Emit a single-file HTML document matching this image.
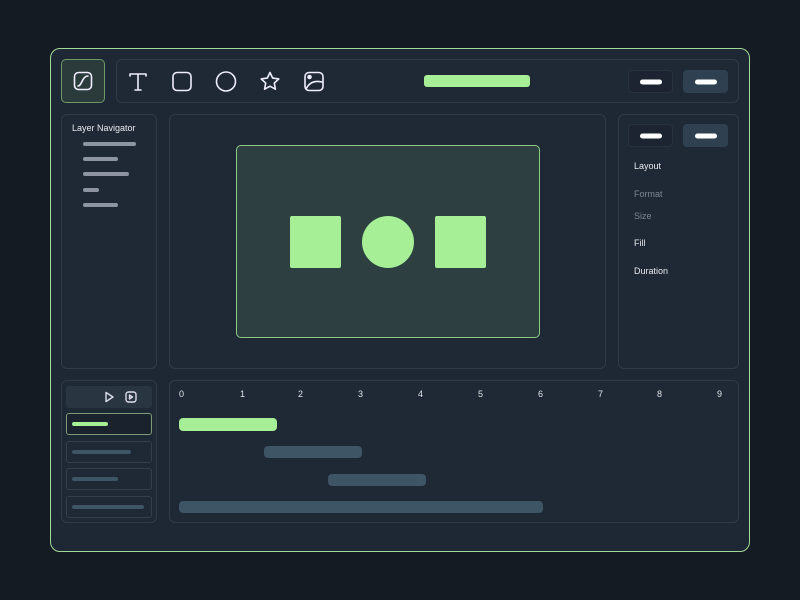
<!DOCTYPE html>
<html><head><style>
*{margin:0;padding:0;box-sizing:border-box}
body{width:800px;height:600px;background:#151b23;position:relative;overflow:hidden;font-family:"Liberation Sans",sans-serif}
.a{position:absolute}
.frame{left:50px;top:48px;width:700px;height:504px;border:1.5px solid #9fdc92;border-radius:10px;background:#1e2834}
.p{border:1px solid #2f3b48;border-radius:6px;background:#1f2935}
.g{background:#a6ef97;border-radius:3px}
.pill{width:22px;height:5px;background:#fff;border-radius:3px;position:absolute;left:50%;top:50%;transform:translate(-50%,-50%)}
.btn{border-radius:4px}
.ln{height:4px;background:#8d95a2;border-radius:2px}
.t{color:#e8ebef;font-size:9px}
.num{color:#dfe3e8;font-size:9px;top:389px}
.bar{background:#3e5566;border-radius:4px;height:12px}
.it{border:1px solid #33404c;border-radius:3px;left:66px;width:86px;height:22px}
.it div{position:absolute;left:5px;top:8px;height:4px;border-radius:2px;background:#3e5566}
</style></head><body>
<div class="a frame"></div>
<div class="a" style="left:61px;top:59px;width:44px;height:44px;border:1px solid #6e9a68;border-radius:5px;background:#2b3a3a"></div>
<svg class="a" style="left:73px;top:71px" width="20" height="20" viewBox="0 0 20 20" fill="none" stroke="#eef" stroke-width="1.6"><rect x="1.5" y="1.5" width="17" height="17" rx="4"/><path d="M5 15c4 0 4-10 10-10" stroke-linecap="round"/></svg>
<div class="a p" style="left:116px;top:59px;width:623px;height:44px"></div>
<svg class="a" style="left:128px;top:71px" width="200" height="22" viewBox="0 0 200 22" fill="none" stroke="#eef" stroke-width="1.6" stroke-linecap="round" stroke-linejoin="round">
<path d="M2 3h16M2 3v2M18 3v2M10 3v16M7 19h6"/>
<rect x="45" y="1.5" width="18" height="18" rx="4"/>
<circle cx="98" cy="10.5" r="9.5"/>
<path d="M142 1.5l2.7 5.6 6.1.8-4.5 4.2 1.1 6.1-5.4-3-5.4 3 1.1-6.1-4.5-4.2 6.1-.8z"/>
<rect x="177" y="1.5" width="18" height="18" rx="4"/><circle cx="181.5" cy="6" r="1.5" fill="#eef"/><path d="M178 18c3-6 8-9 16-7"/>
</svg>
<div class="a g" style="left:424px;top:75px;width:106px;height:12px"></div>
<div class="a btn" style="left:628px;top:70px;width:45px;height:23px;background:#1b2430;border:1px solid #27323e"><div class="pill"></div></div>
<div class="a btn" style="left:683px;top:70px;width:45px;height:23px;background:#2f4150"><div class="pill"></div></div>
<div class="a p" style="left:61px;top:114px;width:96px;height:255px"></div>
<div class="a t" style="left:72px;top:123px">Layer Navigator</div>
<div class="a ln" style="left:83px;top:142px;width:53px"></div>
<div class="a ln" style="left:83px;top:157px;width:35px"></div>
<div class="a ln" style="left:83px;top:172px;width:46px"></div>
<div class="a ln" style="left:83px;top:188px;width:16px"></div>
<div class="a ln" style="left:83px;top:203px;width:35px"></div>
<div class="a p" style="left:169px;top:114px;width:437px;height:255px"></div>
<div class="a" style="left:236px;top:145px;width:304px;height:193px;background:#2d3f40;border:1px solid #8fcd84;border-radius:5px"></div>
<div class="a g" style="left:290px;top:216px;width:51px;height:52px;border-radius:2px"></div>
<div class="a g" style="left:362px;top:216px;width:52px;height:52px;border-radius:50%"></div>
<div class="a g" style="left:435px;top:216px;width:51px;height:52px;border-radius:2px"></div>
<div class="a p" style="left:618px;top:114px;width:121px;height:255px"></div>
<div class="a btn" style="left:628px;top:124px;width:45px;height:23px;background:#1b2430;border:1px solid #27323e"><div class="pill"></div></div>
<div class="a btn" style="left:683px;top:124px;width:45px;height:23px;background:#2f4150"><div class="pill"></div></div>
<div class="a t" style="left:634px;top:161px">Layout</div>
<div class="a t" style="left:634px;top:189px;color:#7d8793">Format</div>
<div class="a t" style="left:634px;top:211px;color:#7d8793">Size</div>
<div class="a t" style="left:634px;top:238px">Fill</div>
<div class="a t" style="left:634px;top:266px">Duration</div>
<div class="a p" style="left:61px;top:380px;width:96px;height:143px"></div>
<div class="a" style="left:66px;top:386px;width:86px;height:22px;background:#2a3542;border-radius:3px"></div>
<svg class="a" style="left:103px;top:390px" width="36" height="14" viewBox="0 0 36 14" fill="none" stroke="#dde" stroke-width="1.4" stroke-linejoin="round"><path d="M3 2.5v9l7-4.5z"/><rect x="23" y="2" width="10" height="10" rx="2.5"/><path d="M26.5 5v4l3-2z"/></svg>
<div class="a it" style="top:413px;border-color:#7f9a7a;background:#1a232d"><div style="width:36px;background:#a6ef97"></div></div>
<div class="a it" style="top:441px"><div style="width:59px"></div></div>
<div class="a it" style="top:468px"><div style="width:46px"></div></div>
<div class="a it" style="top:496px"><div style="width:72px"></div></div>
<div class="a p" style="left:169px;top:380px;width:570px;height:143px"></div>
<div class="a num" style="left:179px">0</div><div class="a num" style="left:240px">1</div><div class="a num" style="left:298px">2</div><div class="a num" style="left:358px">3</div><div class="a num" style="left:418px">4</div><div class="a num" style="left:478px">5</div><div class="a num" style="left:538px">6</div><div class="a num" style="left:598px">7</div><div class="a num" style="left:657px">8</div><div class="a num" style="left:717px">9</div>
<div class="a g" style="left:179px;top:418px;width:98px;height:13px;border-radius:4px"></div>
<div class="a bar" style="left:264px;top:446px;width:98px"></div>
<div class="a bar" style="left:328px;top:474px;width:98px"></div>
<div class="a bar" style="left:179px;top:501px;width:364px"></div>
</body></html>
